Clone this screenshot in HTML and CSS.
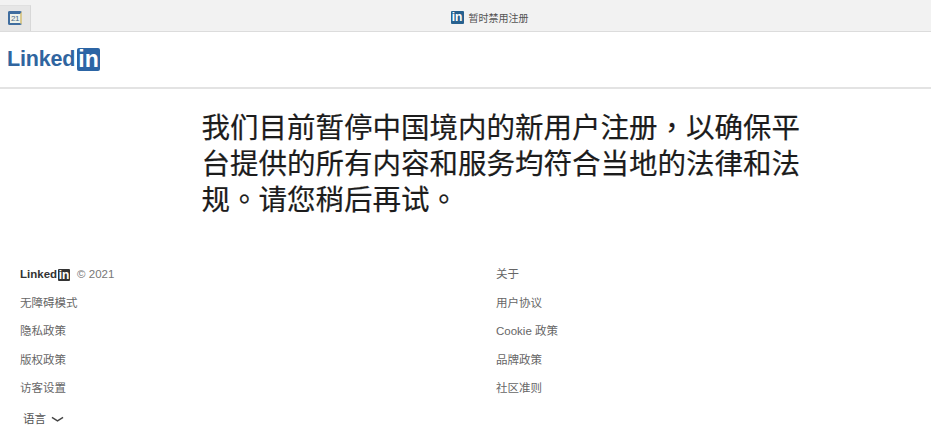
FILE: index.html
```html
<!DOCTYPE html>
<html lang="zh-CN">
<head>
<meta charset="utf-8">
<title>暂时禁用注册</title>
<link rel="stylesheet" href="styles.css">
</head>
<body>
<div class="tabbar">
  <div class="tab">
    <span class="calendar">21</span>
  </div>
  <div class="tab-title">
    <span class="badge badge-tab">in</span>
    <span>暂时禁用注册</span>
  </div>
</div>
<header class="site-header">
  <div class="logo">Linked<span class="badge badge-main">in</span></div>
</header>
<main class="message">
  <h1 lang="zh-TW">我们目前暂停中国境内的新用户注册，以确保平台提供的所有内容和服务均符合当地的法律和法规。请您稍后再试。</h1>
</main>
<footer class="footer">
  <ul class="col col-left">
    <li class="brand"><span class="logo-small">Linked<span class="badge badge-small">in</span></span><span class="copy">© 2021</span></li>
    <li>无障碍模式</li>
    <li>隐私政策</li>
    <li>版权政策</li>
    <li>访客设置</li>
    <li class="lang">语言
      <svg class="chevron" viewBox="0 0 14 7" aria-hidden="true"><path d="M1 1.2 L7 5 L13 1.2" fill="none" stroke="#444" stroke-width="1.5"/></svg>
    </li>
  </ul>
  <ul class="col col-right">
    <li>关于</li>
    <li>用户协议</li>
    <li>Cookie 政策</li>
    <li>品牌政策</li>
    <li>社区准则</li>
  </ul>
</footer>
</body>
</html>
```
FILE: styles.css
```css
* { box-sizing: border-box; }
html, body { margin: 0; padding: 0; }
body {
  width: 931px;
  height: 442px;
  overflow: hidden;
  background: #fff;
  font-family: "Liberation Sans", "Noto Sans CJK SC", sans-serif;
  color: #666;
}
.tabbar {
  height: 32px;
  display: flex;
  align-items: stretch;
  background: #f2f2f2;
  border-bottom: 1px solid #dcdcdc;
}
.tab {
  width: 31px;
  background: #e6e6e6;
  border-right: 1px solid #d8d8d8;
  border-top: 1px solid #e0e0e0;
  margin-top: 5px;
  display: flex;
  align-items: center;
  justify-content: center;
  padding-bottom: 2px;
}
.calendar {
  display: block;
  width: 14px;
  height: 14px;
  border: 2px solid #3f6d9f;
  border-top-width: 3px;
  border-right-color: #d9c98f;
  border-radius: 2px;
  background: #eef2ea;
  color: #4a6a88;
  font-size: 8px;
  line-height: 9px;
  text-align: center;
  letter-spacing: -0.5px;
}
.tab-title {
  flex: 1;
  display: flex;
  align-items: center;
  justify-content: center;
  gap: 5px;
  font-size: 10px;
  color: #555;
  padding-left: 17px;
  padding-top: 6px;
  padding-bottom: 3px;
}
.badge {
  display: inline-flex;
  align-items: center;
  justify-content: center;
  background: #2b6296;
  color: #fff;
  font-family: "Liberation Sans", sans-serif;
  font-weight: 700;
  line-height: 1;
}
.badge-tab { width: 13px; height: 13px; font-size: 12px; border-radius: 1px; background: #27618f; }
.site-header {
  height: 57px;
  border-bottom: 2px solid #e3e3e3;
  padding: 15px 0 0 7px;
}
.logo {
  display: flex;
  align-items: center;
  height: 24px;
  color: #30659f;
  font-family: "Liberation Sans", sans-serif;
  font-weight: 700;
  font-size: 21.5px;
  letter-spacing: -0.2px;
  line-height: 24px;
}
.badge-main {
  width: 23px;
  height: 23px;
  margin-left: 2px;
  font-size: 23px;
  border-radius: 2px;
  background: #2c65a5;
  letter-spacing: 0;
}
.message { padding: 21px 0 0 201.5px; }
.message h1 {
  margin: 0;
  width: 600px;
  font-family: "Liberation Sans", "Noto Sans CJK TC", sans-serif;
  font-size: 28.5px;
  line-height: 36px;
  font-weight: 400;
  color: #1c1c1c;
  -webkit-text-stroke: 0.2px #1c1c1c;
}
.footer {
  display: flex;
  padding: 49px 0 0 20px;
}
.col {
  list-style: none;
  margin: 0;
  padding: 0;
  font-size: 11.5px;
  color: #666;
}
.col li {
  height: 28.5px;
  line-height: 15px;
}
.col-left { width: 476px; }
.col-left .brand { display: flex; align-items: flex-start; gap: 7px; }
.logo-small {
  display: inline-flex;
  align-items: center;
  height: 15px;
  font-family: "Liberation Sans", sans-serif;
  font-weight: 700;
  font-size: 11.5px;
  color: #333;
}
.badge-small {
  width: 12px;
  height: 12px;
  margin-left: 1px;
  font-size: 12px;
  border-radius: 1px;
  background: #333;
}
.copy { color: #777; }
.col .lang {
  display: flex;
  align-items: center;
  gap: 5px;
  height: 15px;
  padding-left: 3px;
  margin-top: 2px;
  color: #555;
}
.chevron { width: 13px; height: 7px; display: block; }
```
